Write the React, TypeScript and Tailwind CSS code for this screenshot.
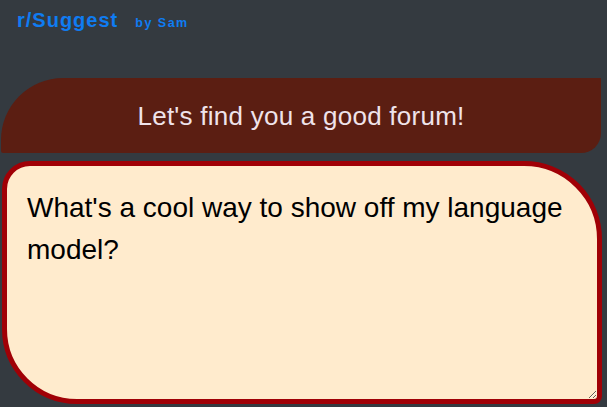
import { useState } from 'react';

export default function App() {
  const [query, setQuery] = useState<string>("What's a cool way to show off my language model?");

  return (
    <div className="min-h-screen w-full bg-[#343a40] font-['Liberation_Sans',Arial,sans-serif]">
      {/* Header */}
      <header className="h-[78px] pt-[9px] pl-[17px] flex items-baseline gap-[17px]">
        <h1 className="text-[20px] leading-[23px] font-bold tracking-[1px] text-[#0f7cf2]">r/Suggest</h1>
        <span className="text-[12.5px] font-bold tracking-[1.5px] text-[#0f7cf2]">by Sam</span>
      </header>

      {/* Banner */}
      <div className="ml-[1px] w-[600px] h-[75px] pt-[19px] bg-[#5b1e12] rounded-tl-[62px] rounded-br-[20px] rounded-bl-[2px] text-center">
        <p className="text-[26px] tracking-[0.25px] text-[#efe3ea]">Let's find you a good forum!</p>
      </div>

      {/* Question box */}
      <textarea
        value={query}
        onChange={(e) => setQuery(e.target.value)}
        className="block mt-[8px] ml-[2px] w-[600px] h-[243px] pt-[21px] px-[20px] text-[28px] leading-[42px] text-black bg-[#ffebcd] border-[5px] border-[#a00006] rounded-tl-[28px] rounded-tr-[78px] rounded-bl-[75px] rounded-br-[8px] outline-none"
      />
    </div>
  );
}
